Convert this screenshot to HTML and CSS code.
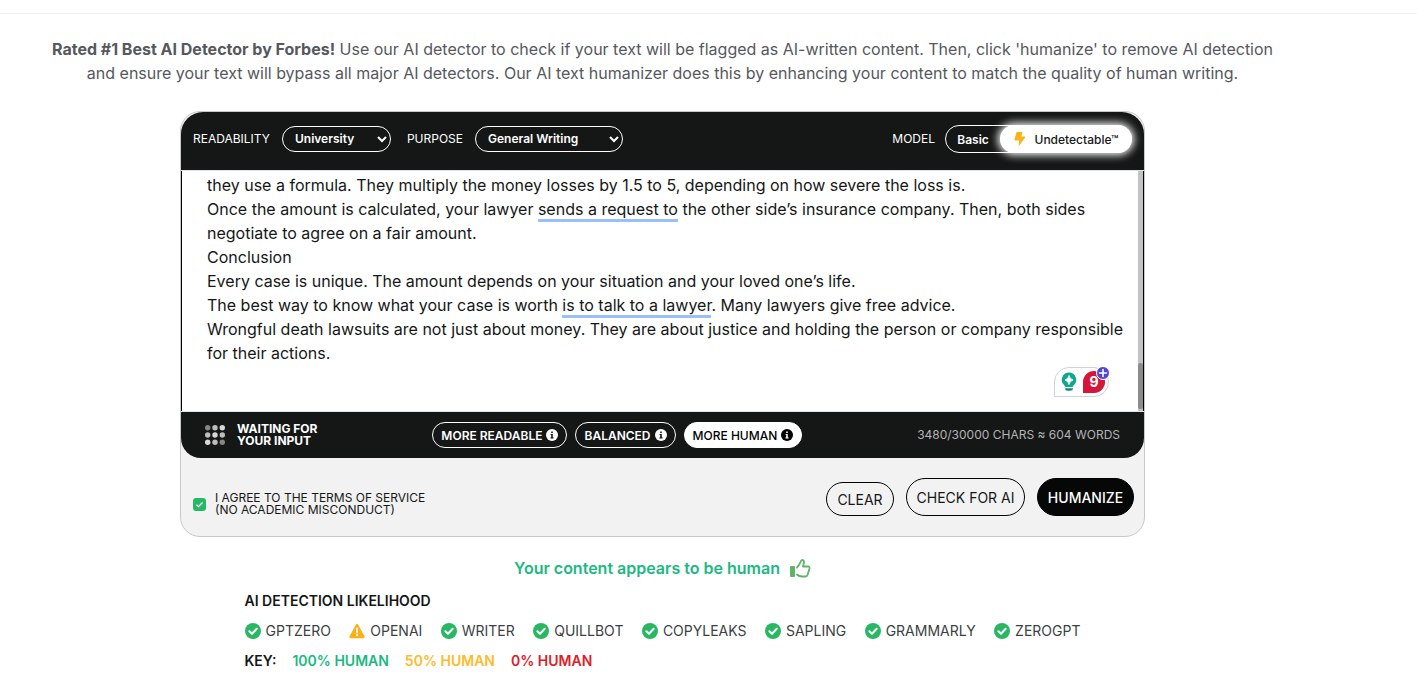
FILE: index.html
```
<!DOCTYPE html>
<html lang="en">
<head>
    <meta charset="utf-8">
    <title>AI Detector</title>
    <link rel="stylesheet" href="styles.css">
</head>
<body>
    <!-- shared icons -->
    <svg class="sprite" aria-hidden="true">
        <symbol id="check" viewBox="0 0 16 16">
            <circle cx="8" cy="8" r="8" fill="#28b864"/>
            <path d="M4.4 8.3l2.6 2.5 4.7-5" fill="none" stroke="#fff" stroke-width="2" stroke-linecap="round" stroke-linejoin="round"/>
        </symbol>
        <symbol id="info" viewBox="0 0 12 12">
            <circle cx="6" cy="6" r="6" fill="currentColor"/>
            <path class="info-mark" d="M5.2 2.4h1.6v1.5H5.2zM4.6 4.9h2.2v3.4h.7v1.1h-3V8.3h.7V6h-.6z"/>
        </symbol>
    </svg>

    <header class="topbar"></header>

    <main>
        <p class="intro"><strong>Rated #1 Best AI Detector by Forbes!</strong> Use our AI detector to check if your text will be flagged as AI-written content. Then, click 'humanize' to remove AI detection<br>and ensure your text will bypass all major AI detectors. Our AI text humanizer does this by enhancing your content to match the quality of human writing.</p>

        <form class="card">
            <div class="options">
                <label for="readability">READABILITY</label>
                <select id="readability" class="readability">
                    <option>University</option>
                    <option>High School</option>
                    <option>Doctorate</option>
                </select>
                <label for="purpose">PURPOSE</label>
                <select id="purpose" class="purpose">
                    <option>General Writing</option>
                    <option>Essay</option>
                    <option>Article</option>
                </select>
                <span class="model-label" id="model-label">MODEL</span>
                <div class="model" role="group" aria-labelledby="model-label">
                    <button type="button" class="basic">Basic</button>
                    <button type="button" class="undetectable">
                        <svg width="12" height="14" viewBox="0 0 12 14"><path d="M2.6 0h5.9L7.3 4.5h3.5q.8 0 .5.8L5.2 13.6q-.7.7-.6-.3l.7-4.8H1.2Q.4 8.5.5 7.6z" fill="#fbb117"/></svg>
                        Undetectable™
                    </button>
                </div>
            </div>

            <div class="editor">
                <div class="text" contenteditable="true" role="textbox" aria-multiline="true" aria-label="Your text" spellcheck="false">
                    <p>they use a formula. They multiply the money losses by 1.5 to 5, depending on how severe the loss is.</p>
                    <p>Once the amount is calculated, your lawyer <u>sends a request to</u> the other side’s insurance company. Then, both sides<br>negotiate to agree on a fair amount.</p>
                    <p>Conclusion</p>
                    <p>Every case is unique. The amount depends on your situation and your loved one’s life.</p>
                    <p>The best way to know what your case is worth <u>is to talk to a lawyer</u>. Many lawyers give free advice.</p>
                    <p>Wrongful death lawsuits are not just about money. They are about justice and holding the person or company responsible<br>for their actions.</p>
                </div>
                <div class="scroll"><div class="thumb"></div></div>
                <div class="grammar">
                    <svg width="16" height="20" viewBox="0 0 16 20">
                        <path d="M8 .5a7.3 7.3 0 0 1 4.5 13L11.500 15h-7l-1-1.500A7.300 7.300 0 0 1 8 .5z" fill="#0fa88c"/>
                        <path d="M8 3.500Q8.600 7.200 12 8 8.600 8.800 8 12.500 7.400 8.800 4 8 7.400 7.200 8 3.500z" fill="#fff" stroke="#fff" stroke-linejoin="round"/>
                        <path d="M4 16.200h8a3 2.500 0 0 1-3 2.500H7a3 2.500 0 0 1-3-2.500z" fill="#0b8a78"/>
                    </svg>
                    <span class="errors">9</span>
                    <svg class="plus" width="14" height="14" viewBox="0 0 14 14">
                        <circle cx="7" cy="7" r="6.5" fill="#5046d6" stroke="#fff"/>
                        <path d="M7 3.500v7M3.500 7h7" stroke="#fff" stroke-width="1.6" stroke-linecap="round"/>
                    </svg>
                </div>
            </div>

            <div class="status">
                <div class="waiting">
                    <svg width="20" height="20" viewBox="0 0 20 20">
                        <g fill="#bdbdbd"><circle cx="10" cy="2.7" r="2.7"/><circle cx="2.7" cy="10" r="2.7"/><circle cx="17.3" cy="10" r="2.7"/><circle cx="10" cy="17.3" r="2.7"/></g>
                        <g fill="#d8d8d8"><circle cx="17.3" cy="2.7" r="2.7"/><circle cx="10" cy="10" r="2.7"/><circle cx="2.7" cy="17.3" r="2.7"/></g>
                        <g fill="#858585"><circle cx="2.7" cy="2.7" r="2.7"/><circle cx="17.3" cy="17.3" r="2.7"/></g>
                    </svg>
                    <strong>WAITING FOR<br>YOUR INPUT</strong>
                </div>
                <div class="modes">
                    <button type="button">MORE READABLE <svg width="12" height="12"><use href="#info"/></svg></button>
                    <button type="button">BALANCED <svg width="12" height="12"><use href="#info"/></svg></button>
                    <button type="button" class="active">MORE HUMAN <svg width="12" height="12"><use href="#info"/></svg></button>
                </div>
                <div class="count">3480/30000 CHARS ≈ 604 WORDS</div>
            </div>

            <div class="actions">
                <div class="agree">
                    <input type="checkbox" id="agree" checked>
                    <svg class="tick" width="13" height="13" viewBox="0 0 13 13"><path d="M3.5 6.800l2 1.900 4-4.200" fill="none" stroke="#fff" stroke-width="1.200"/></svg>
                    <label for="agree">I AGREE TO THE TERMS OF SERVICE<br>(NO ACADEMIC MISCONDUCT)</label>
                </div>
                <button type="button" class="clear">CLEAR</button>
                <button type="button" class="detect">CHECK FOR AI</button>
                <button type="submit" class="humanize">HUMANIZE</button>
            </div>
        </form>

        <div class="verdict">
            Your content appears to be human
            <svg width="21" height="19" viewBox="0 0 21 19">
                <rect x="0" y="7" width="5" height="11" rx="1" fill="#5fb46b"/>
                <path d="M7 15.500Q9 17.500 12 17.500h3.500q1.500 0 2-1.500l2-6.500q.3-2-1.500-2h-5l1-4Q14 1 12.500 1t-2 2Q9.500 6 7 8.500" fill="none" stroke="#5fb46b" stroke-width="1.800" stroke-linecap="round" stroke-linejoin="round"/>
            </svg>
        </div>

        <section class="results">
            <h2>AI DETECTION LIKELIHOOD</h2>
            <ul class="detectors">
                <li><svg width="16" height="16"><use href="#check"/></svg>GPTZERO</li>
                <li>
                    <svg width="16" height="16" viewBox="0 0 16 16">
                        <path d="M8 2L14.500 14h-13z" fill="#fbb117" stroke="#fbb117" stroke-width="2.500" stroke-linejoin="round"/>
                        <path d="M8 5.500v4M8 12v.2" stroke="#fff" stroke-width="1.800" stroke-linecap="round"/>
                    </svg>OPENAI
                </li>
                <li><svg width="16" height="16"><use href="#check"/></svg>WRITER</li>
                <li><svg width="16" height="16"><use href="#check"/></svg>QUILLBOT</li>
                <li><svg width="16" height="16"><use href="#check"/></svg>COPYLEAKS</li>
                <li><svg width="16" height="16"><use href="#check"/></svg>SAPLING</li>
                <li><svg width="16" height="16"><use href="#check"/></svg>GRAMMARLY</li>
                <li><svg width="16" height="16"><use href="#check"/></svg>ZEROGPT</li>
            </ul>
            <p class="key">
                <span>KEY:</span>
                <span class="green">100% HUMAN</span>
                <span class="yellow">50% HUMAN</span>
                <span class="red">0% HUMAN</span>
            </p>
        </section>
    </main>
</body>
</html>
```
FILE: styles.css
```
* {
    box-sizing: border-box;
}

body {
    margin: 0;
    background-color: #ffffff;
    font-family: Inter, 'Liberation Sans', sans-serif;
    font-size: 16px;
    line-height: 24px;
    color: #151716;
}

p, h2, ul {
    margin: 0;
    padding: 0;
}

button, select {
    font-family: inherit;
    cursor: pointer;
}

button {
    padding: 0;
    display: flex;
    align-items: center;
    justify-content: center;
    white-space: nowrap;
}

svg {
    display: block;
    flex: none;
}

.sprite {
    position: absolute;
    width: 0;
    height: 0;
}

.topbar {
    height: 14px;
    border-bottom: 1px solid #f1f1f1;
}

main {
    padding: 23px 92px 0 0;
}

.intro {
    color: #55585d;
    text-align: center;
}

/* Card */
.card {
    max-width: 965px;
    margin: 26px auto 0;
    background-color: #f2f2f2;
    border: 1px solid #c8c8c8;
    border-radius: 20px;
}

.options {
    display: flex;
    align-items: flex-start;
    height: 58px;
    padding: 13px 12px 0;
    background-color: #151716;
    border-radius: 22px 22px 0 0;
    color: #ffffff;
    font-size: 12px;
    line-height: 28px;
}

.options select {
    height: 26px;
    margin: 1px 16px 0 12px;
    padding: 0 0 1px 8px;
    border: 1px solid #ffffff;
    border-radius: 13px;
    background-color: transparent;
    color: #ffffff;
    font-size: 12px;
    font-weight: 600;
}

.options option {
    color: #151716;
}

.readability {
    width: 109px;
}

.purpose {
    width: 148px;
}

.model-label {
    margin-left: auto;
}

.model {
    display: flex;
    width: 187px;
    height: 28px;
    margin-left: 10px;
    border: 1px solid #ffffff;
    border-radius: 14px;
}

.model button {
    border: none;
    background-color: transparent;
    color: #ffffff;
    font-size: 12px;
    font-weight: 600;
}

.model .basic {
    width: 54px;
}

.model .undetectable {
    flex: 1;
    gap: 9px;
    height: 28px;
    margin: -1px -1px 0 0;
    border-radius: 14px;
    background-color: #ffffff;
    box-shadow: 0 0 8px 2px #ffffff;
    color: #151716;
    font-weight: 500;
}

/* Editor */
.editor {
    position: relative;
    display: flex;
    height: 242px;
    border: 1px solid #dfe3ea;
    border-width: 1px 0;
    background-color: #ffffff;
}

.text {
    flex: 1;
    padding: 2px 0 0 25px;
    border-left: 1px solid #000000;
    outline: none;
    white-space: nowrap;
}

.text u {
    text-decoration: none;
    box-shadow: 0 3px #9ac0fa;
}

.scroll {
    display: flex;
    align-items: flex-end;
    width: 6px;
    padding-bottom: 2px;
    border-right: 1px solid #000000;
    background-color: #c1c2c5;
}

.thumb {
    width: 5px;
    height: 46px;
    border-radius: 2px;
    background-color: #8b8b8b;
}

.grammar {
    position: absolute;
    right: 35px;
    bottom: 14px;
    display: flex;
    align-items: center;
    gap: 6px;
    width: 55px;
    height: 30px;
    padding-left: 6px;
    border: 1px solid #ced0de;
    border-radius: 15px 15px 15px 0;
    background-color: #ffffff;
}

.errors {
    width: 22px;
    height: 22px;
    border-radius: 11px 11px 11px 0;
    background-color: #d61638;
    color: #ffffff;
    font-size: 14px;
    font-weight: 700;
    line-height: 22px;
    text-align: center;
}

.plus {
    position: absolute;
    top: -2px;
    right: -2px;
}

/* Status bar */
.status {
    display: flex;
    align-items: center;
    justify-content: space-between;
    height: 46px;
    padding: 0 24px;
    border-radius: 0 0 20px 20px;
    background-color: #151716;
}

.waiting {
    display: flex;
    align-items: center;
    gap: 12px;
    color: #ffffff;
    font-size: 12px;
    line-height: 12px;
}

.modes {
    display: flex;
    gap: 8px;
}

.modes button {
    --mark: #151716;
    gap: 4px;
    height: 26px;
    padding: 0 8px;
    border: 1px solid #ffffff;
    border-radius: 13px;
    background-color: transparent;
    color: #ffffff;
    font-size: 12px;
    font-weight: 600;
}

.modes .active {
    --mark: #ffffff;
    background-color: #ffffff;
    color: #000000;
    font-weight: 500;
}

.info-mark {
    fill: var(--mark);
}

.count {
    color: #b4b4b4;
    font-size: 12px;
}

/* Actions */
.actions {
    display: flex;
    align-items: flex-end;
    gap: 12px;
    padding: 20px 10px;
}

.agree {
    position: relative;
    display: flex;
    align-items: center;
    gap: 9px;
    margin-right: auto;
    padding-left: 2px;
    font-size: 12px;
    line-height: 12px;
}

.agree input {
    appearance: none;
    width: 13px;
    height: 13px;
    margin: 0;
    border-radius: 3px;
    background-color: #28b864;
}

.tick {
    position: absolute;
    left: 2px;
    pointer-events: none;
}

.actions button {
    height: 38px;
    border: 1px solid #000000;
    border-radius: 19px;
    background-color: transparent;
    color: #151716;
    font-size: 14px;
}

.actions .clear {
    width: 68px;
    height: 34px;
}

.actions .detect {
    width: 119px;
}

.actions .humanize {
    width: 97px;
    background-color: #060807;
    color: #ffffff;
    font-weight: 500;
}

/* Results */
.verdict {
    display: flex;
    align-items: center;
    justify-content: center;
    gap: 10px;
    margin-top: 19px;
    color: #1bb982;
    font-weight: 600;
}

.results {
    max-width: 836px;
    margin: 9px auto 0;
    font-size: 14px;
}

.results h2 {
    font-size: 14px;
    font-weight: 600;
    line-height: 24px;
}

.detectors {
    display: flex;
    justify-content: space-between;
    margin-top: 6px;
    list-style: none;
    color: #3c3f43;
}

.detectors li {
    display: flex;
    align-items: center;
    gap: 5px;
}

.key {
    display: flex;
    gap: 16px;
    margin-top: 6px;
    font-size: 14px;
    font-weight: 600;
}

.green {
    color: #1bb982;
}

.yellow {
    color: #fdbb2d;
}

.red {
    color: #de2027;
}
```
